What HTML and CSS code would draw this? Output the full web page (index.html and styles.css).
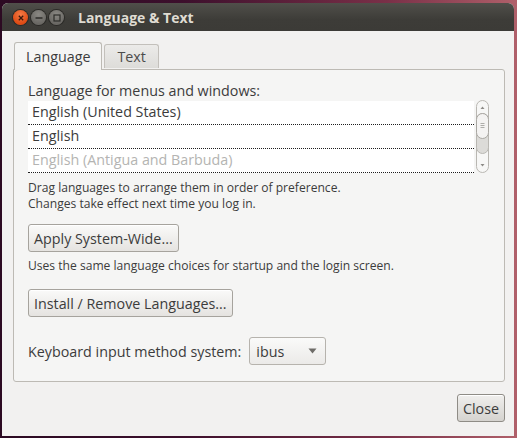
FILE: index.html
```html
<!DOCTYPE html>
<html>
<head>
<meta charset="utf-8">
<link rel="stylesheet" href="styles.css">
</head>
<body>
<div class="window">
  <div class="titlebar">
    <div class="controls">
      <span class="ctl close"><svg width="14" height="14" viewBox="0 0 14 14"><path d="M4.8 4.8 L9.2 9.2 M9.2 4.8 L4.8 9.2" stroke="#3a1a0e" stroke-width="1.3"/></svg></span>
      <span class="ctl min"><svg width="14" height="14" viewBox="0 0 14 14"><path d="M3.5 7 H10.5" stroke="#2e2d2a" stroke-width="1.4"/></svg></span>
      <span class="ctl max"><svg width="14" height="14" viewBox="0 0 14 14"><rect x="4" y="4" width="6" height="6" fill="none" stroke="#2e2d2a" stroke-width="1.2"/></svg></span>
    </div>
    <div class="title">Language &amp; Text</div>
  </div>
  <div class="content">
    <div class="tabs">
      <div class="tab active">Language</div>
      <div class="tab">Text</div>
    </div>
    <div class="panel">
      <div class="label">Language for menus and windows:</div>
      <div class="listwrap">
        <div class="list">
          <div class="row">English (United States)</div>
          <div class="row">English</div>
          <div class="row dim">English (Antigua and Barbuda)</div>
        </div>
        <div class="scroll">
          <svg width="14" height="74" viewBox="0 0 14 74">
            <rect x="0.5" y="0.5" width="12" height="72" rx="6" fill="#f7f7f6" stroke="#b9b7b2"/>
            <path d="M4.5 9 L6.5 6.5 L8.5 9 Z" fill="#8d8b87"/>
            <rect x="0.5" y="13.5" width="12" height="40" rx="6" fill="#dcdbd8" stroke="#b9b7b2"/>
            <rect x="0.5" y="13.5" width="12" height="25" rx="6" fill="#f4f3f2" stroke="#a9a7a2"/>
            <path d="M4.5 23.5 H8.5 M4.5 25.5 H8.5 M4.5 27.5 H8.5" stroke="#9c9a96" stroke-width="0.8"/>
            <path d="M4.5 64 L6.5 66.5 L8.5 64 Z" fill="#8d8b87"/>
          </svg>
        </div>
      </div>
      <div class="help">
        <div class="hl">Drag languages to arrange them in order of preference.</div>
        <div class="hl">Changes take effect next time you log in.</div>
      </div>
      <div class="btnrow"><button class="btn">Apply System-Wide...</button></div>
      <div class="help second"><div class="hl">Uses the same language choices for startup and the login screen.</div></div>
      <div class="btnrow install"><button class="btn">Install / Remove Languages...</button></div>
      <div class="kbd">
        <span class="kbdlabel">Keyboard input method system:</span>
        <div class="combo"><span>ibus</span><svg width="9" height="6" viewBox="0 0 9 6"><path d="M0.5 0.5 H8.5 L4.5 5.5 Z" fill="#6e6c68"/></svg></div>
      </div>
    </div>
    <div class="footer"><button class="btn closebtn">Close</button></div>
  </div>
</div>
</body>
</html>
```
FILE: styles.css
```css
html, body {
  margin: 0;
  padding: 0;
  width: 517px;
  height: 438px;
  overflow: hidden;
}
body {
  background: linear-gradient(90deg, #2c0a22 0%, #3c0f2c 35%, #7a3048 75%, #b0606a 100%);
  font-family: "Open Sans", "DejaVu Sans", sans-serif;
  padding: 3px 3px 2px 2px;
  box-sizing: border-box;
}
.window {
  width: 512px;
  height: 433px;
  display: flex;
  flex-direction: column;
  border-radius: 6px 6px 0 0;
  overflow: hidden;
  background: #f2f1f0;
}
.titlebar {
  height: 28px;
  background: linear-gradient(#504f4a, #3d3c38 60%, #3c3b37);
  display: flex;
  align-items: center;
  padding-left: 11px;
  flex-shrink: 0;
}
.controls {
  display: flex;
  gap: 3px;
  margin-top: 1px;
}
.ctl {
  width: 15px;
  height: 15px;
  border-radius: 50%;
  display: flex;
  align-items: center;
  justify-content: center;
}
.ctl.close {
  background: radial-gradient(circle at 50% 30%, #f47a45, #df4b14 70%);
  box-shadow: 0 0 0 1px #2b2a27;
}
.ctl.min, .ctl.max {
  background: radial-gradient(circle at 50% 30%, #8a8883, #6a6864 70%);
  box-shadow: 0 0 0 1px #2b2a27;
}
.title {
  margin-left: 14px;
  color: #dfdbd2;
  font-weight: bold;
  font-size: 14px;
  margin-top: 1px;
}
.content {
  flex: 1;
  padding: 10px 9px 0 11px;
  display: flex;
  flex-direction: column;
}
.tabs {
  display: flex;
  align-items: flex-end;
  height: 28px;
  padding-left: 1px;
  gap: 2px;
  position: relative;
  z-index: 1;
}
.tab {
  font-size: 14.3px;
  color: #4c4c4c;
  border: 1px solid #c3c0bb;
  border-bottom: none;
  border-radius: 3px 3px 0 0;
  background: linear-gradient(#ecebe9, #dddcd9);
  height: 24px;
  padding: 0 12px;
  display: flex;
  align-items: center;
  box-sizing: border-box;
  margin-bottom: 1px;
}
.tab.active {
  height: 28px;
  background: #f5f5f4;
  border-color: #bdbab4;
  color: #3c3c3c;
  padding: 0 11px;
  margin-bottom: -1px;
}
.panel {
  border: 1px solid #bdbab4;
  border-radius: 0 3px 3px 3px;
  background: #f5f5f4;
  height: 313px;
  box-sizing: border-box;
  padding: 12px 14px 0 14px;
  color: #3c3c3c;
  font-size: 14.3px;
}
.label {
  line-height: 18px;
  height: 18px;
}
.listwrap {
  display: flex;
  margin-top: 1px;
  gap: 2px;
}
.list {
  width: 447px;
  height: 72px;
  background: #ffffff;
  overflow: hidden;
}
.row {
  height: 24px;
  box-sizing: border-box;
  border-bottom: 1px dotted #1e1e1e;
  padding-left: 4px;
  line-height: 22px;
  color: #3c3c3c;
}
.row.dim {
  color: #b4b4b2;
}
.scroll {
  margin-top: -1px;
  height: 74px;
}
.help {
  margin-top: 6px;
  font-size: 12.1px;
  color: #3c3c3c;
}
.hl {
  height: 16px;
  line-height: 16px;
  white-space: nowrap;
}
.help.second {
  margin-top: 6px;
}
.btnrow {
  margin-top: 12px;
}
.btnrow.install {
  margin-top: 15px;
}
.btn {
  font-family: "Open Sans", "DejaVu Sans", sans-serif;
  font-size: 14.3px;
  color: #3c3c3c;
  height: 28px;
  padding: 0 5px;
  border: 1px solid #a6a39d;
  border-radius: 3px;
  background: linear-gradient(#fafaf9, #e5e3e0);
  box-shadow: inset 0 1px 0 #ffffff;
}
.kbd {
  display: flex;
  align-items: center;
  margin-top: 20px;
  gap: 8px;
}
.combo {
  width: 77px;
  height: 28px;
  box-sizing: border-box;
  border: 1px solid #b6b3ad;
  border-radius: 3px;
  background: linear-gradient(#fafaf9, #ebeae8);
  display: flex;
  align-items: center;
  justify-content: space-between;
  padding: 0 8px 0 6px;
}
.footer {
  display: flex;
  justify-content: flex-end;
  padding-top: 12px;
  padding-right: 0;
}
.closebtn {
  width: 48px;
  padding: 0;
  background: linear-gradient(#f0efed, #d5d3cf);
  border-color: #8f8c86;
}
```
